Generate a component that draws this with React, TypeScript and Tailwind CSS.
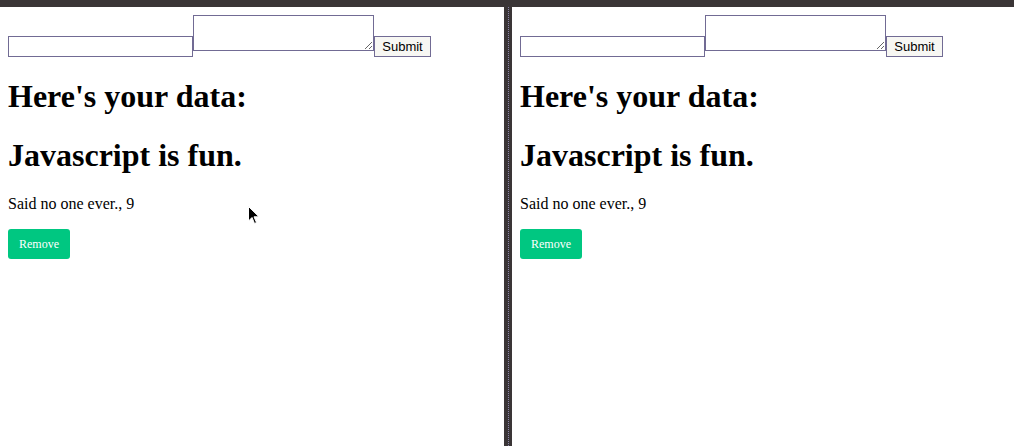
import React from 'react';

const Panel: React.FC<{ className?: string }> = ({ className = '' }) => {
  return (
    <div className={`min-w-0 bg-white p-2 ${className}`}>
      <form className="flex items-start" onSubmit={(e) => e.preventDefault()}>
        <input
          type="text"
          className="mt-[21px] w-[185px] h-[21px] border border-[#716b94] bg-white outline-none"
        />
        <textarea className="w-[181px] h-[36px] border border-[#716b94] bg-white outline-none resize-y block" />
        <button
          type="submit"
          className="mt-[21px] w-[57px] h-[21px] border border-[#716b94] bg-[#f7f7f3] text-[13px] text-black leading-none font-['Liberation_Sans',Arial,sans-serif]"
        >
          Submit
        </button>
      </form>
      <h1 className="text-[32px] font-bold leading-[normal] my-[21.44px] text-black">Here's your data:</h1>
      <h1 className="text-[32px] font-bold leading-[normal] my-[21.44px] text-black">Javascript is fun.</h1>
      <p className="text-base leading-[normal] my-4 text-black">Said no one ever., 9</p>
      <button className="h-[30px] px-[11px] rounded-[3px] bg-[#00c781] text-white text-[12px]">Remove</button>
    </div>
  );
};

const App: React.FC = () => {
  return (
    <div className="relative w-[1014px] h-[446px] overflow-hidden bg-white font-['Liberation_Serif','Times_New_Roman',serif]">
      <div className="h-[7px] bg-[#3a3536]" />
      <div className="flex h-[439px]">
        <Panel className="w-[504px] shrink-0" />
        <div className="w-[8px] shrink-0 bg-[#3a3536] flex justify-center">
          <div className="w-px border-l border-dotted border-[#8a84a8]" />
        </div>
        <Panel className="flex-1" />
      </div>
      {/* mouse pointer */}
      <svg className="absolute left-[248px] top-[206px]" width="12" height="19" viewBox="0 0 12 19">
        <path d="M0.5 0.5 L0.5 15 L4 11.5 L6.5 17.5 L8.5 16.5 L6 10.8 L11 10.8 Z" fill="#000" stroke="#fff" strokeWidth="1" />
      </svg>
    </div>
  );
};

export default App;
